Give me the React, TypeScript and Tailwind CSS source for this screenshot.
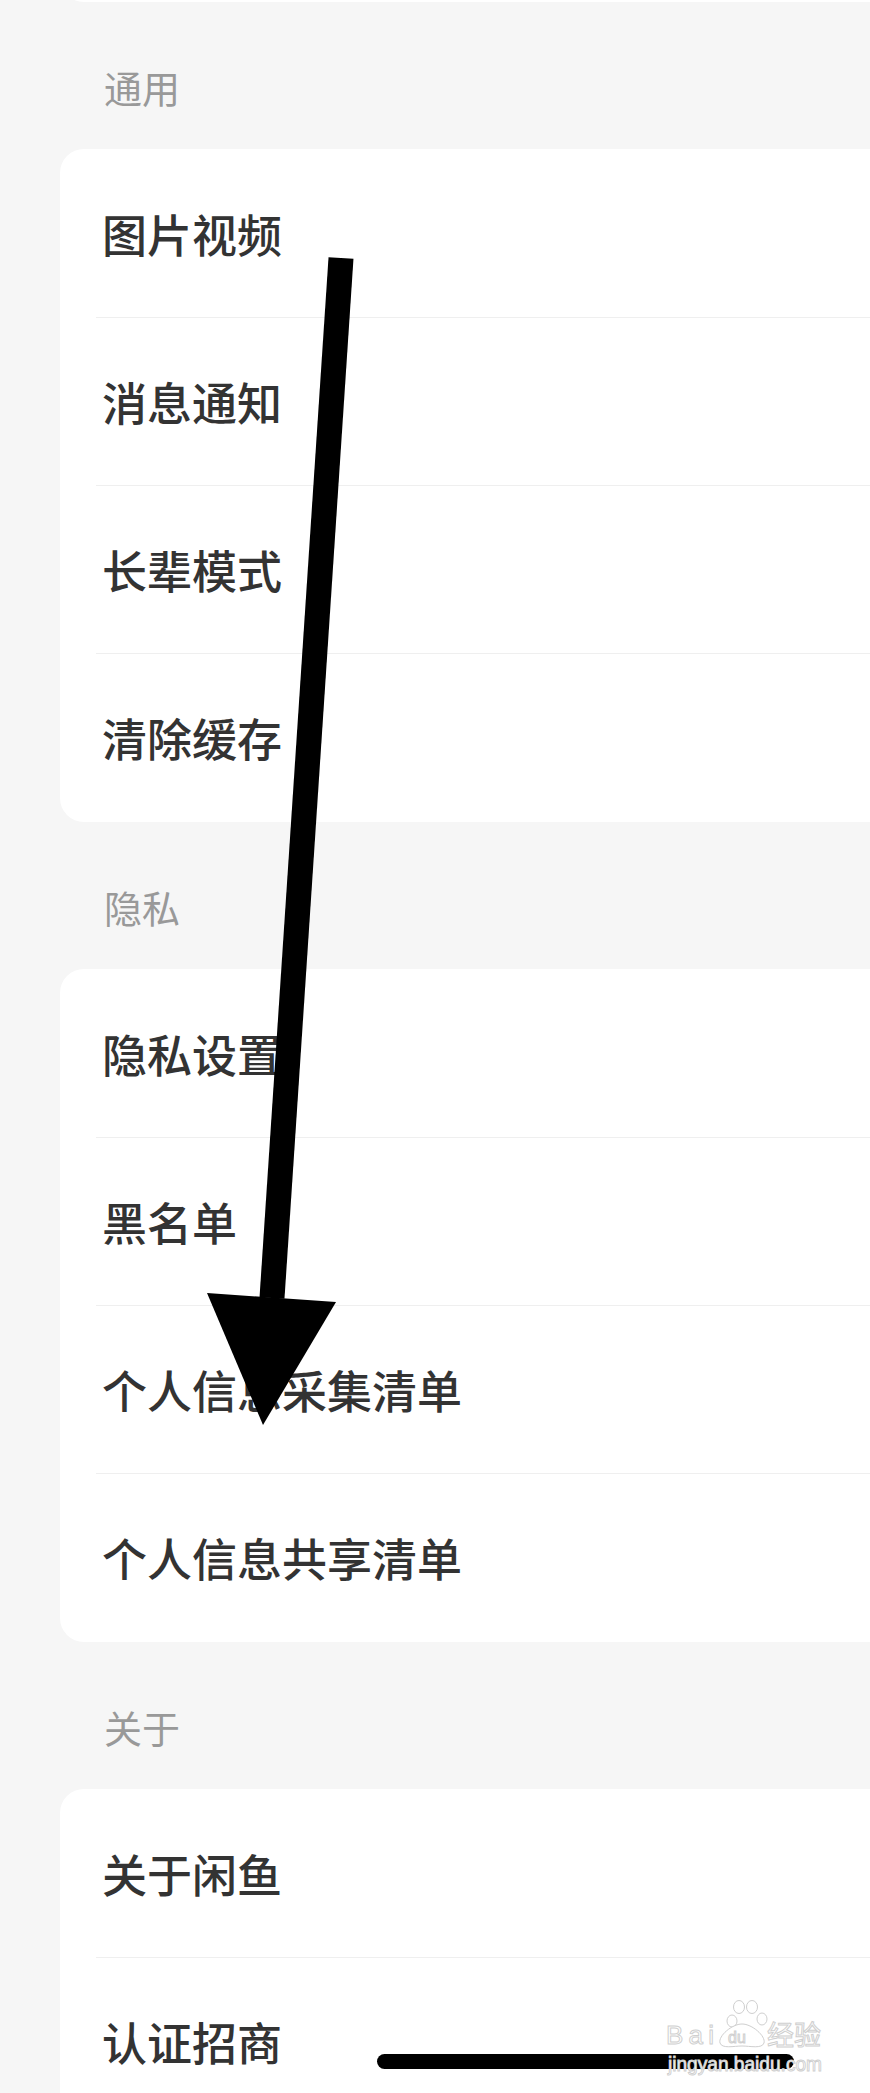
import React from "react";

const sections = [
  { title: "通用", items: ["图片视频", "消息通知", "长辈模式", "清除缓存"] },
  { title: "隐私", items: ["隐私设置", "黑名单", "个人信息采集清单", "个人信息共享清单"] },
  { title: "关于", items: ["关于闲鱼", "认证招商"] },
];

function Row({ label, first }: { label: string; first: boolean }) {
  return (
    <div className={first ? "ml-[36px] h-[168px] flex items-center" : "ml-[36px] h-[168px] flex items-center border-t border-[#efefef]"}>
      <span className="pl-[6px] text-[45px] leading-none font-medium text-[#333333]">{label}</span>
    </div>
  );
}

function Overlay() {
  return (
    <svg className="absolute left-0 top-0 pointer-events-none" width={870} height={2093}>
      {/* annotation arrow */}
      <line x1={341} y1={258} x2={272} y2={1298} stroke="#000" strokeWidth={25} />
      <polygon points="207,1293 336,1302 263,1425" fill="#000" />

      {/* baidu jingyan watermark */}
      <g fill="#fff" stroke="#cfcfcf" strokeWidth={1}>
        <ellipse cx={732} cy={2021} rx={5} ry={6} />
        <ellipse cx={739} cy={2007} rx={5.5} ry={6.5} />
        <ellipse cx={752} cy={2007} rx={5.5} ry={6.5} />
        <ellipse cx={762} cy={2019} rx={5} ry={6} />
        <path d="M742 2024 C752 2024 766 2036 764 2043 C762 2049 750 2046 742 2046 C734 2046 722 2049 720 2043 C718 2036 732 2024 742 2024 Z" />
        <text x={666} y={2044} fontSize={26} fontFamily="Liberation Sans, sans-serif" textLength={48}>Bai</text>
        <text x={728} y={2043} fontSize={16} fontFamily="Liberation Sans, sans-serif">du</text>
        <text x={767} y={2045} fontSize={27} fontFamily="'Noto Sans CJK SC', sans-serif" textLength={54}>经验</text>
        <text x={668} y={2071} fontSize={21} fontFamily="Liberation Sans, sans-serif" textLength={154} lengthAdjust="spacingAndGlyphs">jingyan.baidu.com</text>
      </g>
    </svg>
  );
}

export default function App() {
  return (
    <div className="relative w-[870px] h-[2093px] overflow-hidden bg-[#f6f6f6] font-['Noto_Sans_CJK_SC','Noto_Sans',sans-serif]">
      <div className="ml-[60px] -mt-[24px] h-[26px] bg-white rounded-bl-[24px]" />
      {sections.map((s) => (
        <div key={s.title}>
          <div className="h-[147px] pt-[60px] pl-[104px] text-[38px] leading-[50px] text-[#999999]">{s.title}</div>
          <div className="ml-[60px] pb-px bg-white rounded-l-[24px]">
            {s.items.map((it, i) => (
              <Row key={it} label={it} first={i === 0} />
            ))}
          </div>
        </div>
      ))}
      <div className="absolute left-[377px] top-[2054px] w-[417px] h-[15px] rounded-full bg-black" />
      <Overlay />
    </div>
  );
}
